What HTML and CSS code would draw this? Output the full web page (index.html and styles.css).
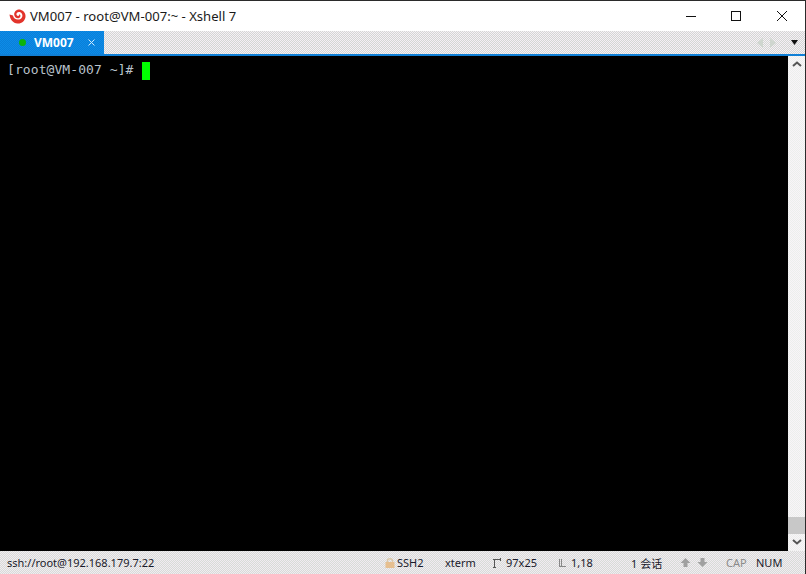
FILE: index.html
```html
<!DOCTYPE html>
<html lang="zh">
<head>
<meta charset="utf-8">
<title>VM007 - root@VM-007:~ - Xshell 7</title>
<link rel="stylesheet" href="styles.css">
</head>
<body>
<div class="window">
  <header class="titlebar">
    <svg class="logo" width="17" height="15" viewBox="0 0 17 15"><path d="M0.500 5.500 L4 6.500 C4.500 9.500 7 11 10 10.500 C13 9.800 14 7 13 5 C12 3 9.500 2.500 8 3.800 C6.800 5 7.500 7 9 7 C10 7 10.500 6 10 5.300 C11.800 5.500 12 8 10.200 9 C8 10 5.300 8.500 5.200 5.500 C5.200 2 8.500 0 11.500 0.700 C14.800 1.500 17 4.500 16.500 8 C16 12 12.500 14.800 8.500 14.500 C4 14.200 1 10.500 0.500 5.500Z" fill="#e2332b"/></svg>
    <span class="title">VM007 - root@VM-007:~ - Xshell 7</span>
    <div class="controls">
      <svg width="46" height="30" viewBox="0 0 46 30"><path d="M19 15.500H29" stroke="#111" fill="none"/></svg>
      <svg width="46" height="30" viewBox="0 0 46 30"><rect x="18.500" y="10.500" width="9" height="9" stroke="#111" fill="none"/></svg>
      <svg width="46" height="30" viewBox="0 0 46 30"><path d="M18 10L28 20M28 10L18 20" stroke="#111" fill="none"/></svg>
    </div>
  </header>
  <nav class="tabbar">
    <div class="tab">
      <span class="dot"></span>
      <span class="tabname">VM007</span>
      <svg class="tabclose" width="7" height="7" viewBox="0 0 7 7"><path d="M.5.500L6.500 6.500M6.500.500L.500 6.500" stroke="#cfe6f8" fill="none"/></svg>
    </div>
    <div class="tabtools">
      <svg width="8" height="12" viewBox="0 0 8 12"><path d="M7 1V11L1 6Z" fill="#cfd6cf"/></svg>
      <svg width="8" height="12" viewBox="0 0 8 12"><path d="M1 1V11L7 6Z" fill="#cfd6cf"/></svg>
      <svg class="caret" width="7" height="5" viewBox="0 0 7 5"><path d="M0 0H7L3.500 5Z" fill="#111"/></svg>
    </div>
  </nav>
  <main class="body">
    <div class="terminal"><span class="prompt">[root@VM-007 ~]#</span><span class="cursor"></span></div>
    <aside class="scrollbar">
      <svg class="arrow" width="18" height="17" viewBox="0 0 18 17"><path d="M5 10L9 6.500L13 10" stroke="#555" stroke-width="2" fill="none"/></svg>
      <div class="track"></div>
      <div class="thumb"></div>
      <svg class="arrow" width="18" height="17" viewBox="0 0 18 17"><path d="M5 6L9 9.500L13 6" stroke="#555" stroke-width="2" fill="none"/></svg>
    </aside>
  </main>
  <footer class="statusbar">
    <span class="addr">ssh://root@192.168.179.7:22</span>
    <svg class="lock" width="12" height="12" viewBox="0 0 12 12"><path d="M3.500 5V3.500C3.500 1 8.500 1 8.500 3.500V5" stroke="#dcc8a8" fill="none" stroke-width="1.500"/><rect x="1.500" y="5" width="9" height="6" fill="#e6bf90"/></svg>
    <span class="ssh">SSH2</span>
    <span class="xterm">xterm</span>
    <svg class="sizeicon" width="9" height="10" viewBox="0 0 9 10"><path d="M2.500 10V1.500H9M1 1.500H4M8.500 0V3M1 9.500H4" stroke="#555" fill="none"/></svg>
    <span class="size">97x25</span>
    <svg class="posicon" width="9" height="10" viewBox="0 0 9 10"><path d="M1.500 1V8M3.500 1V8M1 8.500H8" stroke="#888" fill="none"/></svg>
    <span class="pos">1,18</span>
    <span class="sessions">1 会话</span>
    <svg class="up" width="11" height="11" viewBox="0 0 11 11"><path d="M5.500 1L10.500 6H7.500V10H3.500V6H.500Z" fill="#a0a0a0"/></svg>
    <svg class="down" width="11" height="11" viewBox="0 0 11 11"><path d="M5.500 10L10.500 5H7.500V1H3.500V5H.500Z" fill="#a0a0a0"/></svg>
    <span class="cap">CAP</span>
    <span class="num">NUM</span>
  </footer>
</div>
</body>
</html>
```
FILE: styles.css
```css
* { box-sizing: border-box; }
html, body { margin: 0; padding: 0; }
body { background: #fff; font-family: "Noto Sans", "Noto Sans CJK SC", sans-serif; }
.window {
  width: 806px;
  height: 574px;
  display: flex;
  flex-direction: column;
  border-top: 1px solid #2b2b2b;
  border-right: 1px solid #2b2b2b;
  overflow: hidden;
}
.titlebar {
  height: 30px;
  flex: none;
  display: flex;
  align-items: center;
  padding-left: 9px;
  background: #fff;
}
.logo { flex: none; }
.title { margin-left: 4px; font-size: 13.100px; color: #1a1a1a; white-space: nowrap; }
.controls { margin-left: auto; display: flex; }
.tabbar {
  height: 25px;
  flex: none;
  display: flex;
  border-bottom: 2px solid #0f7fd6;
  background-color: #e4e4e4;
  background-image: repeating-conic-gradient(#f6eef6 0 25%, #d3d8d3 0 50%);
  background-size: 2px 2px;
}
.tab {
  width: 104px;
  display: flex;
  align-items: center;
  padding-left: 19px;
  background-color: #0a86e4;
  background-image: repeating-conic-gradient(#0d8ce8 0 25%, #0a7fd8 0 50%);
  background-size: 2px 2px;
}
.dot { width: 7px; height: 7px; border-radius: 50%; background: #0cb30c; }
.tabname { margin-left: 8px; font-size: 12px; font-weight: 700; color: #fff; }
.tabclose { margin-left: 14px; }
.tabtools { margin-left: auto; display: flex; align-items: center; gap: 5px; padding-right: 7px; }
.caret { margin-left: 9px; }
.body { flex: 1; display: flex; min-height: 0; background: #000; }
.terminal {
  flex: 1;
  padding: 5px 0 0 7px;
  display: flex;
  align-items: flex-start;
  font-family: "DejaVu Sans Mono", monospace;
  font-size: 13px;
  letter-spacing: .08px;
  line-height: 17px;
  color: #b9c2cc;
}
.cursor { width: 8px; height: 18px; margin: 1px 0 0 8px; background: #0f0; }
.scrollbar {
  width: 17px;
  flex: none;
  display: flex;
  flex-direction: column;
  background-color: #f3f3f3;
  background-image: repeating-conic-gradient(#f8f4f8 0 25%, #ecefec 0 50%);
  background-size: 2px 2px;
}
.arrow { flex: none; }
.track { flex: 1; }
.thumb { height: 17px; flex: none; background: #c8c8c8; }
.statusbar {
  height: 23px;
  flex: none;
  display: flex;
  align-items: center;
  padding-left: 7px;
  font-size: 11px;
  color: #1a1a2a;
  white-space: nowrap;
  background-color: #e4e4e4;
  background-image: repeating-conic-gradient(#f2eaf2 0 25%, #d7ddd7 0 50%);
  background-size: 2px 2px;
}
.addr { width: 377px; flex: none; }
.lock { flex: none; margin-right: 1px; }
.ssh { width: 48px; flex: none; }
.xterm { width: 47px; flex: none; }
.sizeicon { flex: none; margin-right: 5px; }
.size { width: 52px; flex: none; }
.posicon { flex: none; margin-right: 4px; }
.pos { width: 60px; flex: none; }
.sessions { width: 49px; flex: none; }
.up { flex: none; margin-right: 6px; }
.down { flex: none; margin-right: 18px; }
.cap { color: #8a8a8a; width: 30px; flex: none; }
.num { flex: none; }
```
